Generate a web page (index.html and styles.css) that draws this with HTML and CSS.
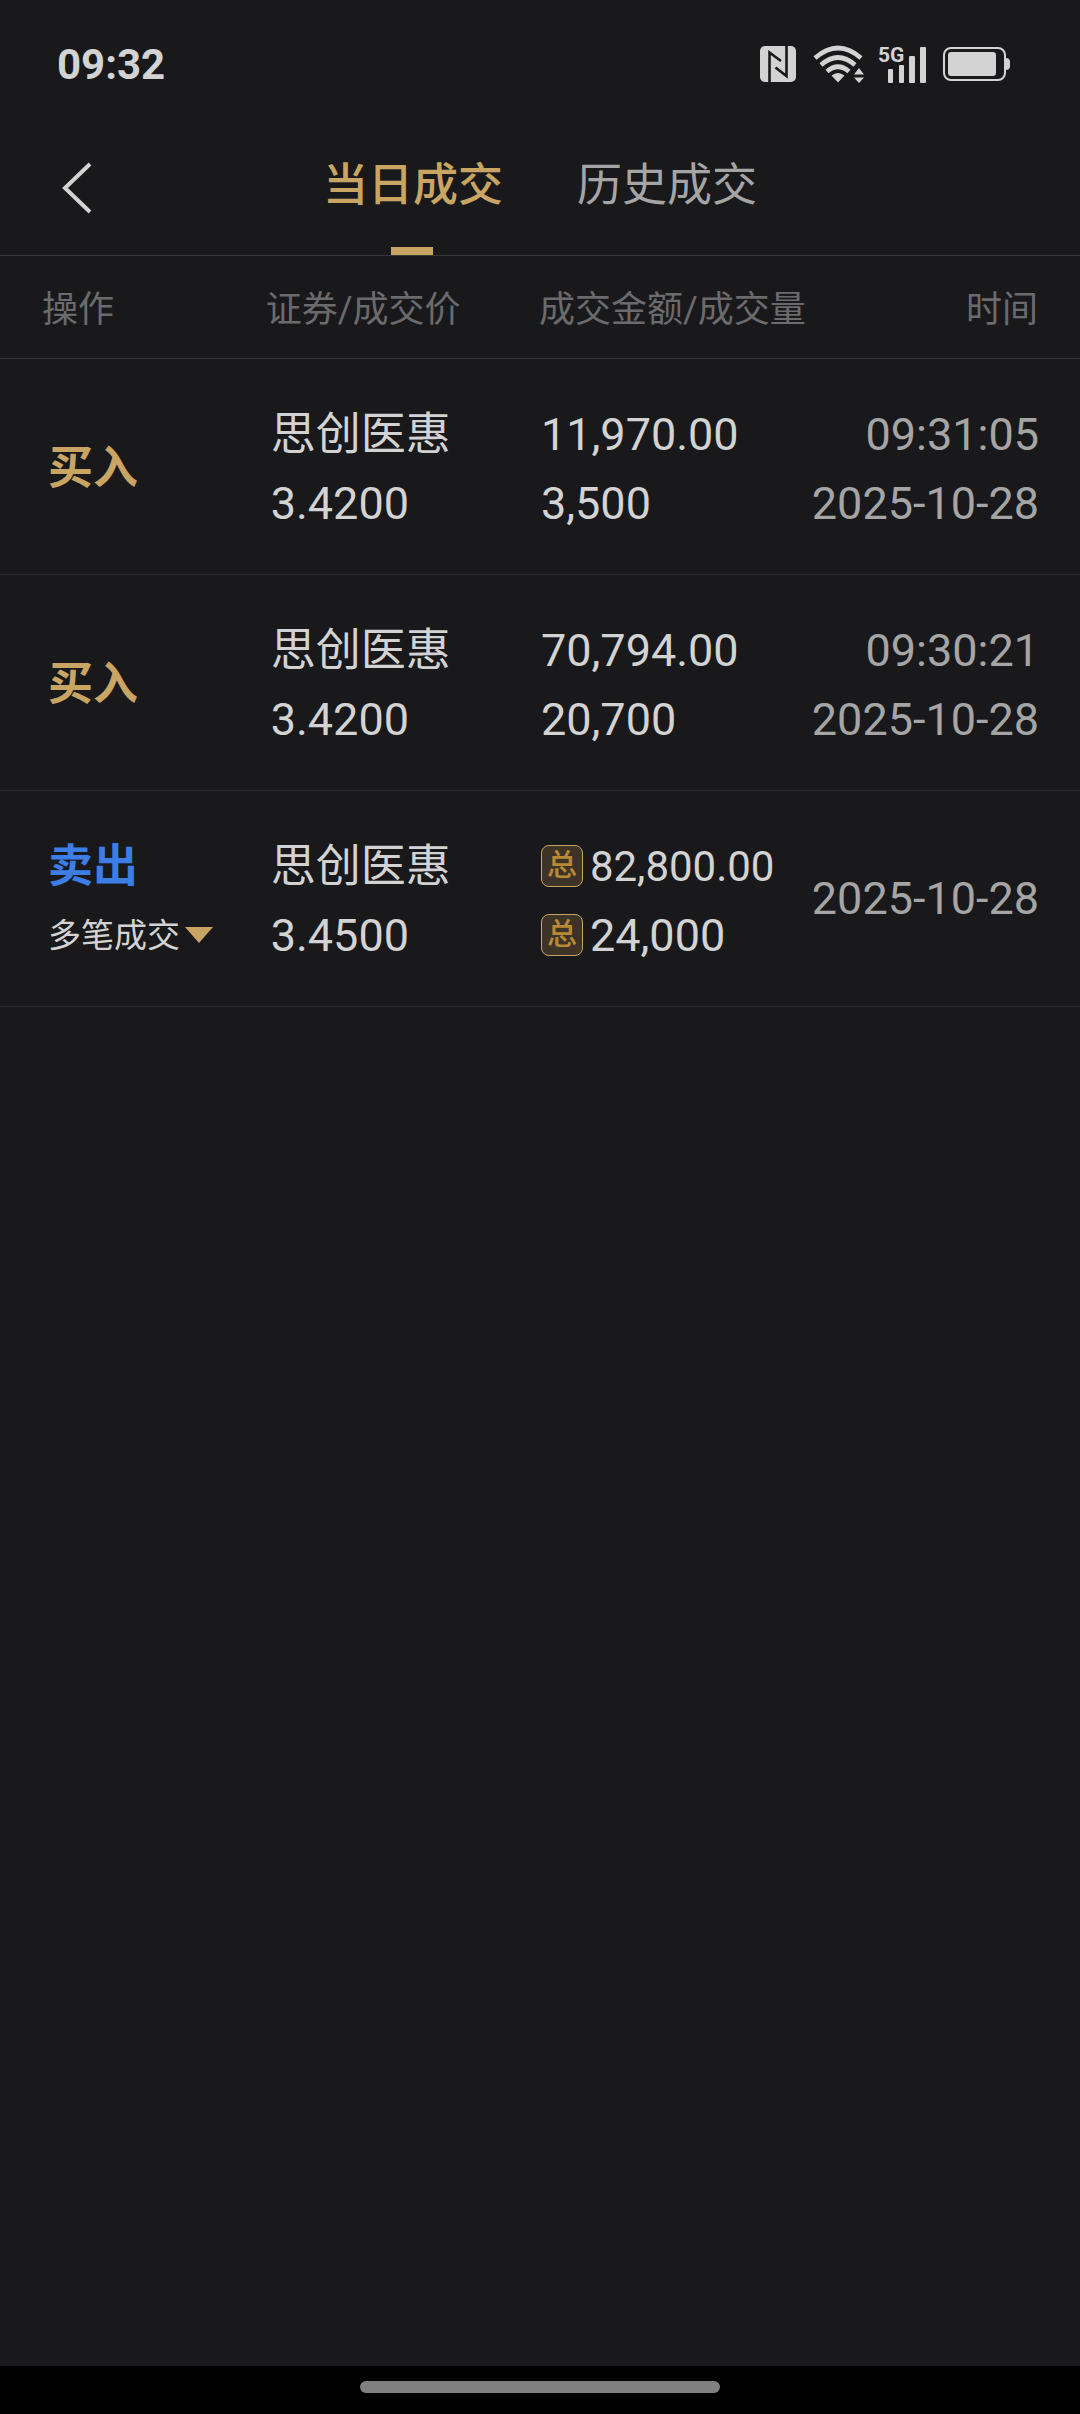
FILE: index.html
```html
<!DOCTYPE html>
<html lang="zh-CN">
<head>
<meta charset="utf-8">
<meta name="viewport" content="width=device-width, initial-scale=1">
<title>当日成交</title>
<link rel="stylesheet" href="styles.css">
</head>
<body>
<div class="status">
  <time class="clock">09:32</time>
  <div class="status-icons">
    <svg class="nfc" viewBox="0 0 36 36" width="36" height="36" aria-hidden="true">
      <rect width="36" height="36" rx="5" fill="#d3d3d3"/>
      <path d="M9.500 36V6.500L21 15M26.500 0V30L15.500 21.500" fill="none" stroke="#19191b" stroke-width="2.600"/>
    </svg>
    <svg class="wifi" viewBox="0 0 52 38" width="52" height="38" aria-hidden="true">
      <g fill="none" stroke="#d3d3d3" stroke-width="4.600">
        <path d="M2 13Q25 -7 48 13"/>
        <path d="M8 20Q25 5 42 20"/>
        <path d="M14 26.500Q25 17 36 26.500"/>
      </g>
      <path d="M18.500 30.500Q25 25.500 31.500 30.500L25 37.500Z" fill="#d3d3d3"/>
      <path d="M41 29.500L46 23L51 29.500ZM41 32.500H51L46 38Z" fill="#d3d3d3"/>
    </svg>
    <svg class="signal" viewBox="0 0 49 46" width="49" height="46" aria-hidden="true">
      <text x="0" y="21" class="signal-text">5G</text>
      <g fill="#d3d3d3">
        <rect x="10" y="28" width="5" height="14" rx="1"/>
        <rect x="21" y="24" width="5" height="18" rx="1"/>
        <rect x="31" y="15" width="6" height="27" rx="1"/>
        <rect x="42" y="6" width="6" height="36" rx="1"/>
      </g>
    </svg>
    <svg class="battery" viewBox="0 0 68 34" width="68" height="34" aria-hidden="true">
      <rect x="1" y="1" width="61" height="32" rx="7" fill="none" stroke="#d3d3d3" stroke-width="2"/>
      <rect x="5" y="5" width="48" height="24" rx="3" fill="#d3d3d3"/>
      <path d="M63 11Q67 11 67 15V19Q67 23 63 23Z" fill="#d3d3d3"/>
    </svg>
  </div>
</div>
<header class="nav">
  <button class="back" type="button" aria-label="返回">
    <svg viewBox="0 0 30 52" width="30" height="52" aria-hidden="true"><path d="M28 2L3 26L28 50" fill="none" stroke="#d3d3d3" stroke-width="4"/></svg>
  </button>
  <nav class="tabs">
    <button class="tab tab-active" type="button">当日成交</button>
    <button class="tab" type="button">历史成交</button>
  </nav>
</header>
<main class="content">
  <table class="trades">
    <colgroup><col class="col-action"><col class="col-stock"><col class="col-amount"><col class="col-time"></colgroup>
    <thead>
      <tr><th>操作</th><th>证券/成交价</th><th>成交金额/成交量</th><th>时间</th></tr>
    </thead>
    <tbody>
      <tr>
        <td class="action"><div class="side buy">买入</div></td>
        <td class="stock"><div>思创医惠</div><div>3.4200</div></td>
        <td class="amount"><div>11,970.00</div><div>3,500</div></td>
        <td class="when"><div>09:31:05</div><div>2025-10-28</div></td>
      </tr>
      <tr>
        <td class="action"><div class="side buy">买入</div></td>
        <td class="stock"><div>思创医惠</div><div>3.4200</div></td>
        <td class="amount"><div>70,794.00</div><div>20,700</div></td>
        <td class="when"><div>09:30:21</div><div>2025-10-28</div></td>
      </tr>
      <tr>
        <td class="action">
          <div class="side sell">卖出</div>
          <button class="more" type="button">多笔成交<svg viewBox="0 0 28 16" width="28" height="16" aria-hidden="true"><path d="M0 0H28L14 16Z" fill="#c9a563"/></svg></button>
        </td>
        <td class="stock"><div>思创医惠</div><div>3.4500</div></td>
        <td class="amount">
          <div class="total"><span class="badge">总</span><span class="fit">82,800.00</span></div>
          <div class="total"><span class="badge">总</span>24,000</div>
        </td>
        <td class="when date-only"><div>2025-10-28</div></td>
      </tr>
    </tbody>
  </table>
</main>
<footer class="home"><div class="pill"></div></footer>
</body>
</html>
```

FILE: styles.css
```css
* { box-sizing: border-box; }

body {
  margin: 0;
  min-height: 100vh;
  display: flex;
  flex-direction: column;
  background: #19191b;
  color: #d3d3d3;
  font-family: Roboto, "Noto Sans CJK SC", sans-serif;
  font-size: 45px;
}

button {
  margin: 0;
  padding: 0;
  border: 0;
  background: none;
  color: inherit;
  font: inherit;
}

svg { display: block; }

.status {
  display: flex;
  justify-content: space-between;
  align-items: center;
  height: 112px;
  padding: 16px 69px 0 57px;
}

.clock {
  font-size: 42px;
  font-weight: 700;
}

.status-icons {
  display: flex;
  align-items: center;
}

.wifi { margin-left: 17px; }
.signal { margin-left: 13px; }
.battery { margin-left: 16px; }

.signal-text {
  font-size: 21px;
  font-weight: 700;
  fill: #d3d3d3;
}

.nav {
  display: grid;
  grid-template-columns: 1fr auto 1fr;
  border-bottom: 1px solid #373739;
}

.back {
  justify-self: start;
  padding: 8px 40px 0 62px;
}

.tabs {
  display: flex;
  gap: 74px;
}

.tab {
  position: relative;
  height: 143px;
  padding-bottom: 4px;
  color: #a5a5a5;
}

.tab-active {
  color: #c9a563;
  font-weight: 500;
}

.tab-active::after {
  content: "";
  position: absolute;
  left: 50%;
  bottom: 0;
  width: 42px;
  height: 8px;
  margin-left: -22px;
  background: #c9a563;
}

.content { flex: 1; }

.trades {
  width: 100%;
  table-layout: fixed;
  border-spacing: 0;
}

.col-action { width: 24.6%; }
.col-stock { width: 25.3%; }
.col-amount { width: 25%; }

th {
  height: 103px;
  padding: 0 0 2px;
  border-bottom: 1px solid #373739;
  color: #6b6b6d;
  font-size: 36px;
  font-weight: 400;
  text-align: left;
  white-space: nowrap;
}

th:first-child { padding-left: 42px; }

th:last-child {
  padding-right: 42px;
  text-align: right;
}

td {
  height: 216px;
  padding: 4px 0 0;
  border-bottom: 1px solid #2d2d2f;
  line-height: 69px;
  white-space: nowrap;
}

.action { padding-left: 48px; }
.stock { padding-left: 5px; }
.amount { padding-left: 2px; }

.when {
  padding-right: 41px;
  color: #a5a5a5;
  text-align: right;
}

.date-only { padding-top: 0; }

.side { font-weight: 700; }
.buy { color: #c9a563; }
.sell { color: #3c7de6; }

.more {
  display: flex;
  align-items: center;
  gap: 5px;
  height: 69px;
  font-size: 33px;
}

.total {
  display: flex;
  align-items: center;
  gap: 7px;
}

.badge {
  width: 42px;
  height: 42px;
  border: 1px solid #c9a563;
  border-radius: 8px;
  background: #3d3326;
  color: #b98a35;
  font-size: 30px;
  font-weight: 500;
  line-height: 38px;
  text-align: center;
}

.fit { font-size: 42px; }

.home {
  display: flex;
  justify-content: center;
  align-items: center;
  height: 48px;
  padding-bottom: 6px;
  background: #000;
}

.pill {
  width: 33.333%;
  height: 12px;
  border-radius: 6px;
  background: #808080;
}
```
